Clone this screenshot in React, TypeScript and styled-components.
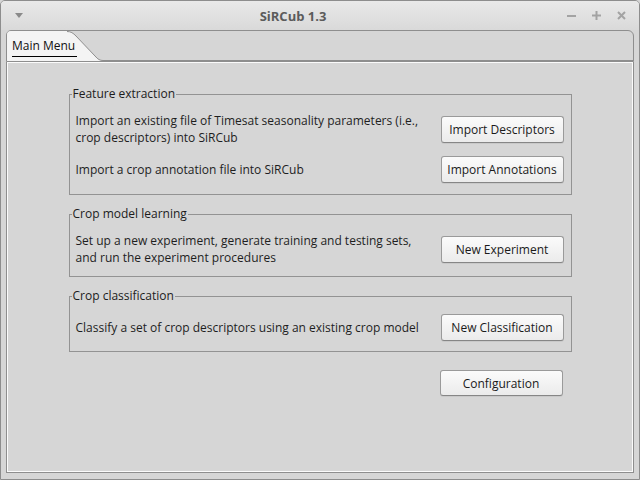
import React from "react";
import styled, { createGlobalStyle } from "styled-components";

const Global = createGlobalStyle`
  html, body { margin: 0; padding: 0; background: #d6d6d6; }
  body { font-family: "Open Sans", "Noto Sans", sans-serif; font-size: 12px; color: #222; }
  #root { width: 640px; height: 480px; }
`;

const Window = styled.div`
  width: 640px;
  height: 480px;
  box-sizing: border-box;
  border: 1px solid #8d8d8d;
  border-radius: 5px 5px 0 0;
  background: #d6d6d6;
  display: flex;
  flex-direction: column;
  overflow: hidden;
`;

const TitleBar = styled.div`
  height: 29px;
  flex: none;
  display: flex;
  align-items: center;
  background: linear-gradient(#e9e9e9, #d9d9d9);
`;

const MenuArrow = styled.div`
  width: 24px;
  padding-left: 14px;
  box-sizing: border-box;
  display: flex;
  align-items: center;
`;

const Title = styled.div`
  flex: 1;
  text-align: center;
  font-weight: bold;
  font-size: 13px;
  color: #5b5b5b;
  padding-right: 6px;
`;

const Controls = styled.div`
  display: flex;
  align-items: center;
  gap: 16px;
  padding: 0 13px 0 0;
`;

const TabPane = styled.div`
  flex: 1;
  margin: 0 5px 6px 5px;
  display: flex;
  flex-direction: column;
`;

const TabHeader = styled.div`
  height: 32px;
  flex: none;
  box-sizing: border-box;
  border: 1px solid #8e8e8e;
  border-radius: 5px 6px 0 0;
  display: flex;
  background: #d6d6d6;
  overflow: hidden;
`;

const Tab = styled.div`
  position: relative;
  width: 96px;
  height: 30px;
  flex: none;
  svg { position: absolute; left: 0; top: 0; }
`;

const TabLabel = styled.span`
  position: relative;
  display: inline-block;
  margin: 7px 0 0 5px;
  line-height: 16px;
  color: #111;
  border-bottom: 1px solid #000;
  padding-bottom: 2px;
  padding-right: 2px;
`;

const TabFiller = styled.div`
  flex: 1;
  border-bottom: 1px solid #8e8e8e;
`;

const Content = styled.div`
  flex: 1;
  box-sizing: border-box;
  border: 1px solid #8e8e8e;
  border-top: none;
  box-shadow: inset 0 0 0 1px #fbfbfb;
  padding: 24px 0 0 0;
  display: flex;
  flex-direction: column;
  align-items: center;
  gap: 11px;
`;

const Group = styled.fieldset<{ $pb?: number }>`
  width: 503px;
  box-sizing: border-box;
  margin: 0;
  border: 1px solid #939393;
  padding: 10px 7px ${(p) => p.$pb ?? 10}px 6px;
  display: flex;
  flex-direction: column;
  gap: 10px;
`;

const Legend = styled.legend`
  padding: 0 1px;
  margin-left: -4px;
  line-height: 16px;
  color: #1c1c1c;
`;

const Row = styled.div`
  display: flex;
  align-items: center;
  justify-content: space-between;
  min-height: 27px;
`;

const Desc = styled.div<{ $wide?: boolean }>`
  line-height: 17px;
  color: #1e1e1e;
  max-width: ${(p) => (p.$wide ? "none" : "360px")};
`;

const Button = styled.button<{ $h?: number }>`
  width: 123px;
  height: ${(p) => p.$h ?? 27}px;
  box-sizing: border-box;
  border: 1px solid #9a9a9a;
  border-bottom-color: #868686;
  border-radius: 3px;
  background: linear-gradient(#fbfbfb, #ebebeb);
  box-shadow: 0 1px 0 rgba(0,0,0,0.06);
  font-family: inherit;
  font-size: 12px;
  color: #1a1a1a;
  padding: 0;
  flex: none;
`;

const Footer = styled.div`
  width: 503px;
  display: flex;
  justify-content: flex-end;
  padding-right: 9px;
  box-sizing: border-box;
  margin-top: 7px;
`;

export default function App() {
  return (
    <>
      <Global />
      <Window>
        <TitleBar>
          <MenuArrow>
            <svg width="8" height="5" viewBox="0 0 8 5"><path d="M0 0 H8 L4 5 Z" fill="#8a8a8a" /></svg>
          </MenuArrow>
          <Title>SiRCub 1.3</Title>
          <Controls>
            <svg width="9" height="9" viewBox="0 0 9 9"><rect x="0" y="4" width="9" height="2" fill="#a3a3a3" /></svg>
            <svg width="9" height="9" viewBox="0 0 9 9"><rect x="0" y="3.5" width="9" height="2" fill="#a3a3a3" /><rect x="3.5" y="0" width="2" height="9" fill="#a3a3a3" /></svg>
            <svg width="9" height="9" viewBox="0 0 9 9"><path d="M1 1 L8 8 M8 1 L1 8" stroke="#a3a3a3" strokeWidth="2" /></svg>
          </Controls>
        </TitleBar>
        <TabPane>
          <TabHeader>
            <Tab>
              <svg width="96" height="30" viewBox="0 0 96 30">
                <path d="M0 0 H60 C64 0 66 2 69 5 L88 25 C91 28.5 93 29.5 96 29.5 V30 H0 Z" fill="#f4f4f4" />
                <path d="M60 0.5 C64 0.5 66 2 69 5 L88 25 C91 28.5 93 29.5 96 29.5" fill="none" stroke="#8e8e8e" />
              </svg>
              <TabLabel>Main Menu</TabLabel>
            </Tab>
            <TabFiller />
          </TabHeader>
          <Content>
            <Group $pb={11}>
              <Legend>Feature extraction</Legend>
              <Row>
                <Desc>Import an existing file of Timesat seasonality parameters (i.e., crop descriptors) into SiRCub</Desc>
                <Button>Import Descriptors</Button>
              </Row>
              <Row>
                <Desc>Import a crop annotation file into SiRCub</Desc>
                <Button>Import Annotations</Button>
              </Row>
            </Group>
            <Group>
              <Legend>Crop model learning</Legend>
              <Row>
                <Desc>Set up a new experiment, generate training and testing sets, and run the experiment procedures</Desc>
                <Button>New Experiment</Button>
              </Row>
            </Group>
            <Group>
              <Legend>Crop classification</Legend>
              <Row>
                <Desc $wide>Classify a set of crop descriptors using an existing crop model</Desc>
                <Button>New Classification</Button>
              </Row>
            </Group>
            <Footer>
              <Button $h={26}>Configuration</Button>
            </Footer>
          </Content>
        </TabPane>
      </Window>
    </>
  );
}
